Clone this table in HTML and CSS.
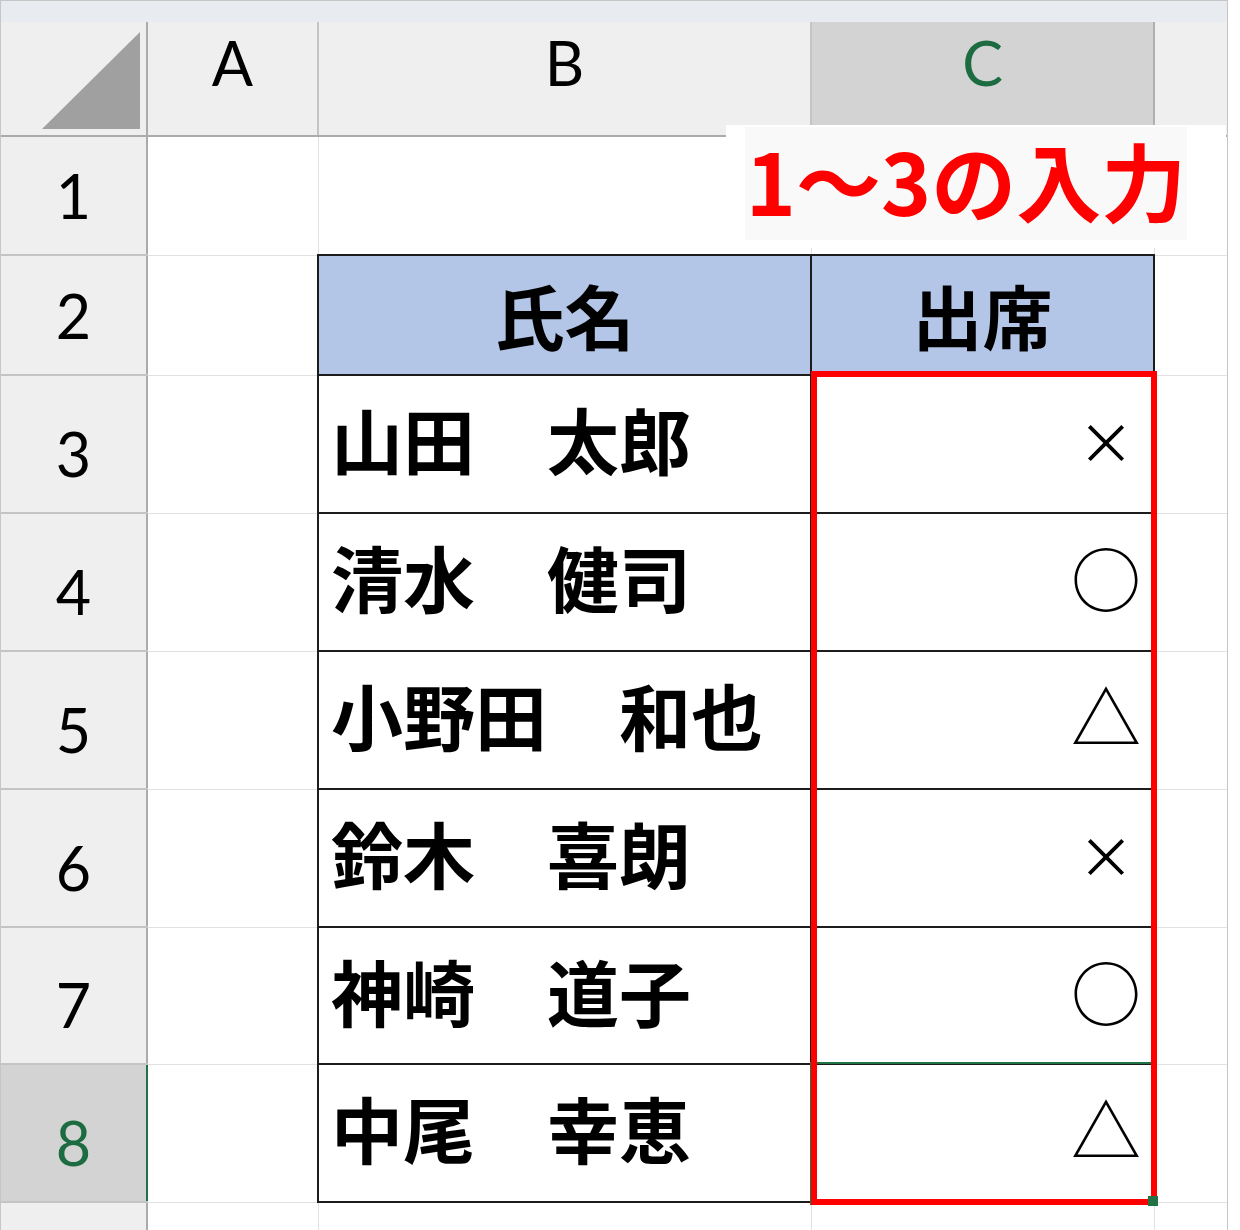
FILE: index.html
```html
<!DOCTYPE html>
<html lang="ja">
<head>
<meta charset="utf-8">
<title>出席表</title>
<link rel="stylesheet" href="styles.css">
</head>
<body>
<div class="frame">
  <div class="strip"></div>
  <table class="sheet">
    <colgroup>
      <col class="c0"><col class="c1"><col class="c2"><col class="c3"><col class="c4">
    </colgroup>
    <tr class="rh-row">
      <th class="corner"><svg class="tri" width="98" height="97" viewBox="0 0 98 97"><polygon points="0,97 98,97 98,0" fill="#a0a0a0"/></svg></th>
      <th class="ch">A</th>
      <th class="ch">B</th>
      <th class="ch sel">C</th>
      <th class="ch last"></th>
    </tr>
    <tr class="r1">
      <th class="rh">1</th><td></td><td></td><td></td><td class="last"></td>
    </tr>
    <tr class="r2">
      <th class="rh">2</th><td></td><td class="t hd">氏名</td><td class="t hd">出席</td><td class="last"></td>
    </tr>
    <tr class="r3">
      <th class="rh">3</th><td></td><td class="t nm">山田　太郎</td><td class="t mk"><span class="x">×</span></td><td class="last"></td>
    </tr>
    <tr class="r4">
      <th class="rh">4</th><td></td><td class="t nm">清水　健司</td><td class="t mk"><span>○</span></td><td class="last"></td>
    </tr>
    <tr class="r5">
      <th class="rh">5</th><td></td><td class="t nm">小野田　和也</td><td class="t mk"><span>△</span></td><td class="last"></td>
    </tr>
    <tr class="r6">
      <th class="rh">6</th><td></td><td class="t nm">鈴木　喜朗</td><td class="t mk"><span class="x">×</span></td><td class="last"></td>
    </tr>
    <tr class="r7">
      <th class="rh">7</th><td></td><td class="t nm">神崎　道子</td><td class="t mk"><span>○</span></td><td class="last"></td>
    </tr>
    <tr class="r8">
      <th class="rh sel">8</th><td></td><td class="t nm">中尾　幸恵</td><td class="t mk"><span>△</span></td><td class="last"></td>
    </tr>
    <tr class="rx">
      <th class="rh bottom"></th><td class="bottom"></td><td class="bottom"></td><td class="bottom"></td><td class="last bottom"></td>
    </tr>
  </table>
  <div class="label"><div class="label-box">1～3の入力</div></div>
  <div class="selection"></div>
  <div class="redbox"></div>
  <div class="handle"></div>
</div>
</body>
</html>
```

FILE: styles.css
```css
html, body {
  margin: 0;
  padding: 0;
  background: #ffffff;
}

.frame {
  position: relative;
  width: 1228px;
  border: 1px solid #c6c6c6;
  box-sizing: border-box;
  background: #ffffff;
}

.strip {
  height: 21px;
  background: #e8ecf0;
}

.sheet {
  border-collapse: collapse;
  table-layout: fixed;
  width: 1226px;
}

.c0 { width: 146px; }
.c1 { width: 171px; }
.c2 { width: 493px; }
.c3 { width: 343px; }
.c4 { width: 73px; }

.rh-row { height: 114px; }
.r1 { height: 119px; }
.r2 { height: 120px; }
.r3, .r4, .r5, .r6 { height: 138px; }
.r7 { height: 137px; }
.r8 { height: 138px; }
.rx { height: 25px; }

th, td {
  padding: 0;
}

td {
  border: 1px solid #e1e1e1;
}

th {
  background: #efefef;
  font-family: Lato, "Noto Sans", sans-serif;
  font-weight: 400;
  font-size: 61px;
  line-height: 60px;
  color: #000000;
  border: 2px solid #c4c4c4;
  text-align: center;
}

.rh-row th {
  border-top: none;
}

th.ch {
  vertical-align: top;
  padding-top: 11px;
  border-bottom-color: #ababab;
}

th.ch.sel {
  background: #d3d3d3;
  color: #1d6b40;
  border-right-color: #b0b0b0;
}

th.corner {
  border-left: none;
  border-bottom-color: #ababab;
  border-right-color: #ababab;
  vertical-align: bottom;
  text-align: right;
  padding: 0 6px 6px 0;
}

.tri {
  display: block;
  margin-left: auto;
}

th.rh {
  border-left: none;
  border-right-color: #ababab;
  vertical-align: bottom;
  padding-bottom: 28px;
}

th.rh.sel {
  background: #d3d3d3;
  color: #1d6b40;
  border-right: 2px solid #217346;
}

.last {
  border-right: none;
}

.bottom {
  border-bottom: none;
}

td.t {
  border: 2px solid #1c1c1c;
  font-family: "Noto Sans CJK JP", sans-serif;
  font-size: 70px;
  line-height: 1;
  color: #000000;
  vertical-align: middle;
  white-space: nowrap;
}

td.hd {
  background: #b4c6e7;
  font-weight: 700;
  text-align: center;
}

td.nm {
  font-weight: 700;
  font-size: 72px;
  text-align: left;
  padding-left: 12px;
  padding-bottom: 12px;
}

td.mk {
  font-weight: 400;
  text-align: right;
  padding-right: 12px;
  padding-bottom: 10px;
}

td.mk span {
  display: inline-block;
  width: 70px;
  text-align: center;
}

td.mk span.x {
  font-size: 56px;
  vertical-align: 5px;
}

.label {
  position: absolute;
  left: 725px;
  top: 124px;
  width: 500px;
  height: 123px;
  background: #ffffff;
  box-sizing: border-box;
  padding: 2px 0 0 19px;
}

.label-box {
  width: 442px;
  height: 113px;
  box-sizing: border-box;
  padding-bottom: 10px;
  background: #f9f9f9;
  display: flex;
  align-items: center;
  justify-content: center;
  font-family: "Noto Sans CJK JP", sans-serif;
  font-weight: 700;
  font-size: 85px;
  line-height: 1;
  color: #ff0000;
  white-space: nowrap;
}

.selection {
  position: absolute;
  left: 809px;
  top: 1061px;
  width: 347px;
  height: 143px;
  border: 2px solid #217346;
  box-sizing: border-box;
}

.redbox {
  position: absolute;
  left: 810px;
  top: 370px;
  width: 346px;
  height: 834px;
  border: 6px solid #ff0000;
  box-sizing: border-box;
}

.handle {
  position: absolute;
  left: 1147px;
  top: 1195px;
  width: 10px;
  height: 10px;
  background: #217346;
}
```
